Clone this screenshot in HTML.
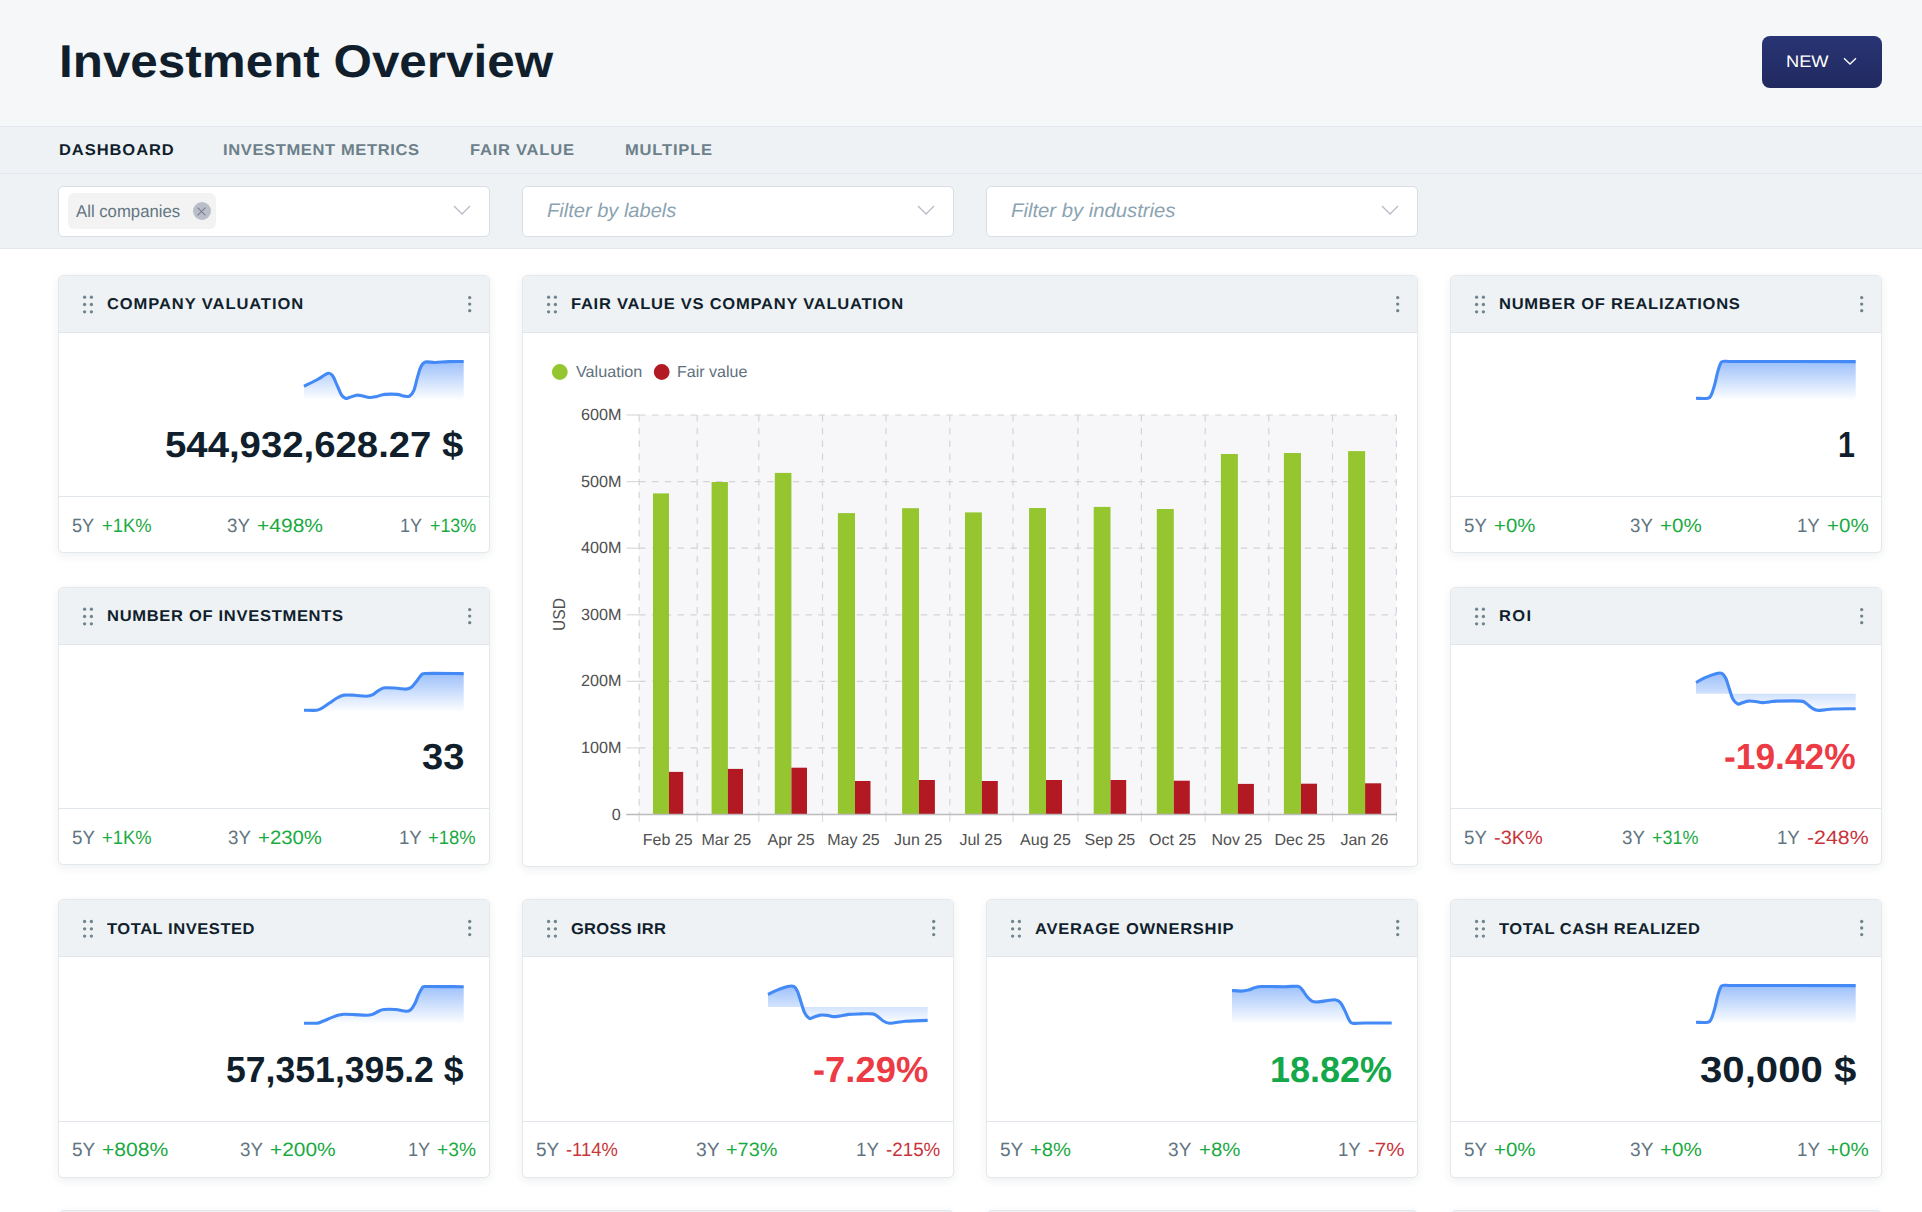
<!DOCTYPE html><html lang="en"><head><meta charset="utf-8"><title>Investment Overview</title><style>
*{box-sizing:border-box}
html,body{margin:0;padding:0}
body{width:1922px;height:1212px;overflow:hidden;background:#fff;position:relative;font-family:'Liberation Sans', sans-serif}
.t{position:absolute;white-space:pre;line-height:normal;transform-origin:0 0;font-family:'Liberation Sans', sans-serif;text-rendering:geometricPrecision}
.hdr{position:absolute;left:0;top:0;width:100%;height:126px;background:#f5f7f9}
.tabs{position:absolute;left:0;top:126px;width:100%;height:123px;background:#eef2f5;border-top:1px solid #e3e7ee;border-bottom:1px solid #e3e7ee}
.tabs:after{content:"";position:absolute;left:0;right:0;top:46px;height:1px;background:#e3e7ee}
.btn{position:absolute;left:1762px;top:36px;width:120px;height:52px;border-radius:8px;background:linear-gradient(#283474,#21295f)}
.sel{position:absolute;top:186px;width:432px;height:51px;background:#fff;border:1px solid #d9dee6;border-radius:5px}
.chip{position:absolute;left:68px;top:193px;width:148px;height:36px;border-radius:6px;background:#f3f3f4}
.x{position:absolute;left:192.5px;top:202.1px;width:18.4px;height:18.4px;border-radius:50%;background:#b9bec9}
.card{position:absolute;background:#fff;border:1px solid #e3e8ec;border-radius:5px;box-shadow:0 3px 10px rgba(20,40,60,.07);overflow:hidden}
.ch{height:57px;background:#eef2f5;border-bottom:1px solid #dfe5ea}
.cf{position:absolute;left:0;right:0;top:220px;height:1px;background:#dfe5ea}
.dot{position:absolute;width:3.4px;height:3.4px;border-radius:50%;background:#6f848d}
.sp{position:absolute;overflow:visible}
</style></head><body><svg width="0" height="0" style="position:absolute"><defs><linearGradient id="sg" gradientUnits="userSpaceOnUse" x1="0" y1="0" x2="0" y2="40"><stop offset="0" stop-color="#4488f6" stop-opacity=".55"/><stop offset="1" stop-color="#4488f6" stop-opacity="0"/></linearGradient></defs></svg><div class="hdr"></div><div class="tabs"></div><header><div class="btn"></div><svg style="position:absolute;left:1843px;top:57px" width="14" height="9" viewBox="0 0 14 9"><path d="M1,1.2 L7,7 L13,1.2" fill="none" stroke="#fff" stroke-width="1.3"/></svg><span class="t" style="left:58.78px;top:34.00px;font-size:46px;font-weight:700;color:#111f2d;transform:scaleX(1.0737);">Investment Overview</span>
<span class="t" style="left:1785.75px;top:51.90px;font-size:16.6px;font-weight:400;color:#ffffff;transform:scaleX(1.0993);">NEW</span></header>
<nav><span class="t" style="left:58.57px;top:141.90px;font-size:15.6px;font-weight:700;letter-spacing:0.866px;color:#111f2d;transform:scaleX(1.0600);">DASHBOARD</span>
<span class="t" style="left:223.48px;top:141.90px;font-size:15.6px;font-weight:700;letter-spacing:0.588px;color:#6c808a;transform:scaleX(1.0600);">INVESTMENT METRICS</span>
<span class="t" style="left:469.87px;top:141.90px;font-size:15.6px;font-weight:700;letter-spacing:0.720px;color:#6c808a;transform:scaleX(1.0600);">FAIR VALUE</span>
<span class="t" style="left:624.77px;top:141.90px;font-size:15.6px;font-weight:700;letter-spacing:0.762px;color:#6c808a;transform:scaleX(1.0600);">MULTIPLE</span></nav>
<div class="filters"><div class="sel" style="left:58px"></div><svg style="position:absolute;left:453.4px;top:205.0px" width="18" height="11" viewBox="0 0 18 11"><path d="M1,1 L9,9 L17,1" fill="none" stroke="#b7bcc8" stroke-width="1.3"/></svg><div class="sel" style="left:522px"></div><svg style="position:absolute;left:917.4px;top:205.0px" width="18" height="11" viewBox="0 0 18 11"><path d="M1,1 L9,9 L17,1" fill="none" stroke="#b7bcc8" stroke-width="1.3"/></svg><div class="sel" style="left:986px"></div><svg style="position:absolute;left:1381.4px;top:205.0px" width="18" height="11" viewBox="0 0 18 11"><path d="M1,1 L9,9 L17,1" fill="none" stroke="#b7bcc8" stroke-width="1.3"/></svg><div class="chip"></div><div class="x"></div><svg style="position:absolute;left:197.2px;top:206.8px" width="9" height="9" viewBox="0 0 9 9"><path d="M0.6,0.6 L8.4,8.4 M8.4,0.6 L0.6,8.4" fill="none" stroke="#7a808c" stroke-width="1.1"/></svg><span class="t" style="left:75.71px;top:202.10px;font-size:17.1px;font-weight:400;color:#62767f;transform:scaleX(0.9790);">All companies</span>
<span class="t" style="left:547.47px;top:200.10px;font-size:19.6px;font-weight:400;font-style:italic;color:#8ba3b1;transform:scaleX(1.0237);">Filter by labels</span>
<span class="t" style="left:1011.47px;top:200.10px;font-size:19.6px;font-weight:400;font-style:italic;color:#8ba3b1;transform:scaleX(1.0347);">Filter by industries</span></div>
<main>
<section><div class="card" style="left:58px;top:275px;width:432px;height:278px"><div class="ch"></div><div class="cf" style="top:220px"></div></div><svg class="sp" style="left:304.2px;top:360.0px" width="160" height="42" viewBox="0 0 160 42"><path d="M0.0,26.4C2.2,25.2 9.5,21.7 13.5,19.5C17.5,17.3 21.6,13.9 24.1,13.3C26.6,12.7 27.1,13.8 28.6,15.8C30.1,17.8 31.5,21.9 33.0,25.1C34.5,28.3 36.0,32.6 37.4,34.8C38.8,37.0 40.1,37.8 41.4,38.3C42.7,38.8 43.6,38.0 45.4,37.5C47.2,37.0 50.3,35.5 52.4,35.2C54.5,34.9 55.6,35.3 57.8,35.7C60.0,36.1 63.2,37.4 65.7,37.5C68.2,37.6 70.3,36.9 72.8,36.4C75.3,35.9 77.4,34.7 80.8,34.4C84.2,34.1 89.9,34.1 93.1,34.4C96.3,34.7 98.1,35.8 100.2,36.1C102.3,36.4 103.9,37.1 105.5,36.1C107.1,35.1 108.6,33.6 109.9,30.4C111.2,27.2 112.3,21.1 113.5,17.1C114.7,13.1 115.7,9.0 117.0,6.5C118.3,4.0 119.0,2.8 121.4,2.1C123.8,1.4 127.4,2.6 131.2,2.5C135.0,2.4 139.7,1.8 144.4,1.6C149.2,1.4 157.1,1.5 159.7,1.5L159.7,40L0,40Z" fill="url(#sg)"/><path d="M0.0,26.4C2.2,25.2 9.5,21.7 13.5,19.5C17.5,17.3 21.6,13.9 24.1,13.3C26.6,12.7 27.1,13.8 28.6,15.8C30.1,17.8 31.5,21.9 33.0,25.1C34.5,28.3 36.0,32.6 37.4,34.8C38.8,37.0 40.1,37.8 41.4,38.3C42.7,38.8 43.6,38.0 45.4,37.5C47.2,37.0 50.3,35.5 52.4,35.2C54.5,34.9 55.6,35.3 57.8,35.7C60.0,36.1 63.2,37.4 65.7,37.5C68.2,37.6 70.3,36.9 72.8,36.4C75.3,35.9 77.4,34.7 80.8,34.4C84.2,34.1 89.9,34.1 93.1,34.4C96.3,34.7 98.1,35.8 100.2,36.1C102.3,36.4 103.9,37.1 105.5,36.1C107.1,35.1 108.6,33.6 109.9,30.4C111.2,27.2 112.3,21.1 113.5,17.1C114.7,13.1 115.7,9.0 117.0,6.5C118.3,4.0 119.0,2.8 121.4,2.1C123.8,1.4 127.4,2.6 131.2,2.5C135.0,2.4 139.7,1.8 144.4,1.6C149.2,1.4 157.1,1.5 159.7,1.5" fill="none" stroke="#448af7" stroke-width="3.1" stroke-linejoin="round"/></svg><span class="t" style="left:107.10px;top:295.95px;font-size:15.6px;font-weight:700;letter-spacing:0.859px;color:#111f2d;transform:scaleX(1.0600);">COMPANY VALUATION</span>
<span class="t" style="left:165.36px;top:423.80px;font-size:36.2px;font-weight:700;color:#111f2d;transform:scaleX(1.0591);">544,932,628.27 $</span>
<span class="t" style="left:71.88px;top:515.50px;font-size:19.3px;font-weight:400;color:#62747f;transform:scaleX(0.9427);">5Y</span>
<span class="t" style="left:101.89px;top:515.50px;font-size:19.3px;font-weight:400;color:#1aaa42;transform:scaleX(0.9514);">+1K%</span>
<span class="t" style="left:226.89px;top:515.50px;font-size:19.3px;font-weight:400;color:#62747f;transform:scaleX(0.9730);">3Y</span>
<span class="t" style="left:257.47px;top:515.50px;font-size:19.3px;font-weight:400;color:#1aaa42;transform:scaleX(1.0896);">+498%</span>
<span class="t" style="left:399.80px;top:515.50px;font-size:19.3px;font-weight:400;color:#62747f;transform:scaleX(0.9374);">1Y</span>
<span class="t" style="left:429.71px;top:515.50px;font-size:19.3px;font-weight:400;color:#1aaa42;transform:scaleX(0.9267);">+13%</span></section>
<section><div class="card" style="left:58px;top:587px;width:432px;height:278px"><div class="ch"></div><div class="cf" style="top:220px"></div></div><svg class="sp" style="left:304.2px;top:672.0px" width="160" height="42" viewBox="0 0 160 42"><path d="M0.0,38.2C2.1,38.2 9.6,38.6 12.6,38.3C15.6,37.9 15.8,37.4 18.0,36.1C20.2,34.9 23.2,32.6 25.9,30.8C28.5,29.0 31.5,26.8 33.9,25.5C36.3,24.2 37.3,23.5 40.1,23.1C42.9,22.7 47.0,23.1 50.7,23.3C54.4,23.5 59.2,24.3 62.2,24.2C65.2,24.1 66.3,23.9 68.4,22.9C70.5,21.9 72.5,19.6 74.6,18.4C76.7,17.2 77.7,16.2 80.8,15.8C83.9,15.4 89.6,16.0 93.1,16.2C96.6,16.4 99.6,17.2 102.0,17.1C104.4,17.0 105.5,16.6 107.3,15.3C109.1,14.0 111.0,11.2 112.6,9.2C114.2,7.2 115.7,4.7 117.0,3.4C118.3,2.1 117.0,1.8 120.6,1.5C127.7,1.2 153.2,1.6 159.7,1.6L159.7,40L0,40Z" fill="url(#sg)"/><path d="M0.0,38.2C2.1,38.2 9.6,38.6 12.6,38.3C15.6,37.9 15.8,37.4 18.0,36.1C20.2,34.9 23.2,32.6 25.9,30.8C28.5,29.0 31.5,26.8 33.9,25.5C36.3,24.2 37.3,23.5 40.1,23.1C42.9,22.7 47.0,23.1 50.7,23.3C54.4,23.5 59.2,24.3 62.2,24.2C65.2,24.1 66.3,23.9 68.4,22.9C70.5,21.9 72.5,19.6 74.6,18.4C76.7,17.2 77.7,16.2 80.8,15.8C83.9,15.4 89.6,16.0 93.1,16.2C96.6,16.4 99.6,17.2 102.0,17.1C104.4,17.0 105.5,16.6 107.3,15.3C109.1,14.0 111.0,11.2 112.6,9.2C114.2,7.2 115.7,4.7 117.0,3.4C118.3,2.1 117.0,1.8 120.6,1.5C127.7,1.2 153.2,1.6 159.7,1.6" fill="none" stroke="#448af7" stroke-width="3.1" stroke-linejoin="round"/></svg><span class="t" style="left:107.07px;top:607.95px;font-size:15.6px;font-weight:700;letter-spacing:0.651px;color:#111f2d;transform:scaleX(1.0600);">NUMBER OF INVESTMENTS</span>
<span class="t" style="left:421.97px;top:735.80px;font-size:36.2px;font-weight:700;color:#111f2d;transform:scaleX(1.0547);">33</span>
<span class="t" style="left:71.85px;top:827.50px;font-size:19.3px;font-weight:400;color:#62747f;transform:scaleX(0.9747);">5Y</span>
<span class="t" style="left:101.89px;top:827.50px;font-size:19.3px;font-weight:400;color:#1aaa42;transform:scaleX(0.9514);">+1K%</span>
<span class="t" style="left:227.59px;top:827.50px;font-size:19.3px;font-weight:400;color:#62747f;transform:scaleX(0.9730);">3Y</span>
<span class="t" style="left:257.80px;top:827.50px;font-size:19.3px;font-weight:400;color:#1aaa42;transform:scaleX(1.0559);">+230%</span>
<span class="t" style="left:398.65px;top:827.50px;font-size:19.3px;font-weight:400;color:#62747f;transform:scaleX(0.9656);">1Y</span>
<span class="t" style="left:428.49px;top:827.50px;font-size:19.3px;font-weight:400;color:#1aaa42;transform:scaleX(0.9535);">+18%</span></section>
<section><div class="card" style="left:1450px;top:275px;width:432px;height:278px"><div class="ch"></div><div class="cf" style="top:220px"></div></div><svg class="sp" style="left:1696.2px;top:360.0px" width="160" height="42" viewBox="0 0 160 42"><path d="M0.0,38.3C2.0,38.3 9.2,38.9 11.8,38.3C14.4,37.7 14.1,37.1 15.3,34.8C16.5,32.4 17.8,27.9 18.8,24.2C19.8,20.5 20.6,15.9 21.5,12.7C22.4,9.4 23.2,6.6 24.1,4.7C25.0,2.8 24.2,1.9 26.8,1.4C29.4,0.9 26.8,1.5 40.0,1.5C62.1,1.5 139.8,1.6 159.7,1.6L159.7,40L0,40Z" fill="url(#sg)"/><path d="M0.0,38.3C2.0,38.3 9.2,38.9 11.8,38.3C14.4,37.7 14.1,37.1 15.3,34.8C16.5,32.4 17.8,27.9 18.8,24.2C19.8,20.5 20.6,15.9 21.5,12.7C22.4,9.4 23.2,6.6 24.1,4.7C25.0,2.8 24.2,1.9 26.8,1.4C29.4,0.9 26.8,1.5 40.0,1.5C62.1,1.5 139.8,1.6 159.7,1.6" fill="none" stroke="#448af7" stroke-width="3.1" stroke-linejoin="round"/></svg><span class="t" style="left:1498.87px;top:295.95px;font-size:15.6px;font-weight:700;letter-spacing:0.688px;color:#111f2d;transform:scaleX(1.0600);">NUMBER OF REALIZATIONS</span>
<span class="t" style="left:1837.83px;top:423.80px;font-size:36.2px;font-weight:700;color:#111f2d;transform:scaleX(0.8400);">1</span>
<span class="t" style="left:1463.95px;top:515.50px;font-size:19.3px;font-weight:400;color:#62747f;transform:scaleX(0.9701);">5Y</span>
<span class="t" style="left:1494.10px;top:515.50px;font-size:19.3px;font-weight:400;color:#1aaa42;transform:scaleX(1.0549);">+0%</span>
<span class="t" style="left:1630.29px;top:515.50px;font-size:19.3px;font-weight:400;color:#62747f;transform:scaleX(0.9684);">3Y</span>
<span class="t" style="left:1660.39px;top:515.50px;font-size:19.3px;font-weight:400;color:#1aaa42;transform:scaleX(1.0655);">+0%</span>
<span class="t" style="left:1796.65px;top:515.50px;font-size:19.3px;font-weight:400;color:#62747f;transform:scaleX(0.9656);">1Y</span>
<span class="t" style="left:1826.69px;top:515.50px;font-size:19.3px;font-weight:400;color:#1aaa42;transform:scaleX(1.0655);">+0%</span></section>
<section><div class="card" style="left:1450px;top:587px;width:432px;height:278px"><div class="ch"></div><div class="cf" style="top:220px"></div></div><svg class="sp" style="left:1696.2px;top:672.0px" width="160" height="42" viewBox="0 0 160 42"><path d="M0.0,10.5C1.5,9.7 5.7,7.1 9.1,5.6C12.5,4.1 17.8,2.1 20.6,1.4C23.4,0.7 24.3,0.5 25.9,1.4C27.4,2.2 28.6,3.9 29.9,6.5C31.1,9.1 32.2,13.6 33.4,17.1C34.6,20.6 35.6,24.8 37.0,27.3C38.4,29.8 40.2,31.4 41.8,32.0C43.3,32.6 44.5,31.3 46.3,30.8C48.1,30.3 50.2,29.3 52.4,29.1C54.6,28.9 57.1,29.2 59.5,29.5C61.9,29.8 64.2,30.5 66.6,30.6C69.0,30.7 71.3,30.1 73.7,29.9C76.1,29.6 75.7,29.2 80.8,29.1C85.9,29.0 99.8,28.7 104.6,29.1C109.4,29.5 108.0,30.1 109.9,31.3C111.8,32.5 114.2,34.9 116.1,36.1C118.0,37.3 119.3,38.0 121.4,38.3C123.5,38.6 125.8,38.1 128.5,37.9C131.2,37.7 132.2,37.2 137.4,37.0C142.6,36.8 156.0,36.8 159.7,36.7L159.7,21.8L0,21.8Z" fill="url(#sg)"/><path d="M0.0,10.5C1.5,9.7 5.7,7.1 9.1,5.6C12.5,4.1 17.8,2.1 20.6,1.4C23.4,0.7 24.3,0.5 25.9,1.4C27.4,2.2 28.6,3.9 29.9,6.5C31.1,9.1 32.2,13.6 33.4,17.1C34.6,20.6 35.6,24.8 37.0,27.3C38.4,29.8 40.2,31.4 41.8,32.0C43.3,32.6 44.5,31.3 46.3,30.8C48.1,30.3 50.2,29.3 52.4,29.1C54.6,28.9 57.1,29.2 59.5,29.5C61.9,29.8 64.2,30.5 66.6,30.6C69.0,30.7 71.3,30.1 73.7,29.9C76.1,29.6 75.7,29.2 80.8,29.1C85.9,29.0 99.8,28.7 104.6,29.1C109.4,29.5 108.0,30.1 109.9,31.3C111.8,32.5 114.2,34.9 116.1,36.1C118.0,37.3 119.3,38.0 121.4,38.3C123.5,38.6 125.8,38.1 128.5,37.9C131.2,37.7 132.2,37.2 137.4,37.0C142.6,36.8 156.0,36.8 159.7,36.7" fill="none" stroke="#448af7" stroke-width="3.1" stroke-linejoin="round"/></svg><span class="t" style="left:1498.87px;top:607.95px;font-size:15.6px;font-weight:700;letter-spacing:1.276px;color:#111f2d;transform:scaleX(1.0600);">ROI</span>
<span class="t" style="left:1723.79px;top:735.80px;font-size:36.2px;font-weight:700;color:#ec3b45;transform:scaleX(0.9766);">-19.42%</span>
<span class="t" style="left:1463.95px;top:827.50px;font-size:19.3px;font-weight:400;color:#62747f;transform:scaleX(0.9701);">5Y</span>
<span class="t" style="left:1494.15px;top:827.50px;font-size:19.3px;font-weight:400;color:#c9333b;transform:scaleX(1.0358);">-3K%</span>
<span class="t" style="left:1621.79px;top:827.50px;font-size:19.3px;font-weight:400;color:#62747f;transform:scaleX(0.9730);">3Y</span>
<span class="t" style="left:1652.01px;top:827.50px;font-size:19.3px;font-weight:400;color:#1aaa42;transform:scaleX(0.9308);">+31%</span>
<span class="t" style="left:1776.75px;top:827.50px;font-size:19.3px;font-weight:400;color:#62747f;transform:scaleX(0.9656);">1Y</span>
<span class="t" style="left:1806.69px;top:827.50px;font-size:19.3px;font-weight:400;color:#c9333b;transform:scaleX(1.1065);">-248%</span></section>
<section><div class="card" style="left:58px;top:899px;width:432px;height:279px"><div class="ch"></div><div class="cf" style="top:221px"></div></div><svg class="sp" style="left:304.2px;top:983.9px" width="160" height="42" viewBox="0 0 160 42"><path d="M0.0,39.2C2.1,39.2 9.5,39.5 12.6,39.2C15.7,38.9 16.4,38.2 18.8,37.3C21.2,36.4 24.1,34.9 26.8,33.9C29.5,32.9 32.6,31.7 34.8,31.1C37.0,30.5 37.5,30.3 40.1,30.2C42.8,30.1 47.0,30.4 50.7,30.6C54.4,30.8 59.2,31.3 62.2,31.3C65.2,31.3 66.3,31.1 68.4,30.4C70.5,29.7 72.7,28.1 74.6,27.3C76.5,26.5 77.1,25.8 79.9,25.5C82.7,25.2 87.7,25.2 91.4,25.5C95.1,25.8 99.5,27.2 102.0,27.3C104.5,27.4 104.9,27.2 106.4,26.0C107.9,24.8 109.5,22.3 110.8,19.8C112.1,17.3 113.2,13.5 114.4,10.9C115.6,8.3 116.9,5.7 117.9,4.3C118.9,2.9 117.9,2.8 120.6,2.5C127.6,2.2 153.2,2.8 159.7,2.8L159.7,40L0,40Z" fill="url(#sg)"/><path d="M0.0,39.2C2.1,39.2 9.5,39.5 12.6,39.2C15.7,38.9 16.4,38.2 18.8,37.3C21.2,36.4 24.1,34.9 26.8,33.9C29.5,32.9 32.6,31.7 34.8,31.1C37.0,30.5 37.5,30.3 40.1,30.2C42.8,30.1 47.0,30.4 50.7,30.6C54.4,30.8 59.2,31.3 62.2,31.3C65.2,31.3 66.3,31.1 68.4,30.4C70.5,29.7 72.7,28.1 74.6,27.3C76.5,26.5 77.1,25.8 79.9,25.5C82.7,25.2 87.7,25.2 91.4,25.5C95.1,25.8 99.5,27.2 102.0,27.3C104.5,27.4 104.9,27.2 106.4,26.0C107.9,24.8 109.5,22.3 110.8,19.8C112.1,17.3 113.2,13.5 114.4,10.9C115.6,8.3 116.9,5.7 117.9,4.3C118.9,2.9 117.9,2.8 120.6,2.5C127.6,2.2 153.2,2.8 159.7,2.8" fill="none" stroke="#448af7" stroke-width="3.1" stroke-linejoin="round"/></svg><span class="t" style="left:107.44px;top:920.70px;font-size:15.6px;font-weight:700;letter-spacing:0.509px;color:#111f2d;transform:scaleX(1.0600);">TOTAL INVESTED</span>
<span class="t" style="left:226.37px;top:1048.55px;font-size:36.2px;font-weight:700;color:#111f2d;transform:scaleX(0.9838);">57,351,395.2 $</span>
<span class="t" style="left:71.64px;top:1140.25px;font-size:19.3px;font-weight:400;color:#62747f;transform:scaleX(0.9839);">5Y</span>
<span class="t" style="left:102.07px;top:1140.25px;font-size:19.3px;font-weight:400;color:#1aaa42;transform:scaleX(1.0947);">+808%</span>
<span class="t" style="left:239.68px;top:1140.25px;font-size:19.3px;font-weight:400;color:#62747f;transform:scaleX(0.9777);">3Y</span>
<span class="t" style="left:270.08px;top:1140.25px;font-size:19.3px;font-weight:400;color:#1aaa42;transform:scaleX(1.0846);">+200%</span>
<span class="t" style="left:407.59px;top:1140.25px;font-size:19.3px;font-weight:400;color:#62747f;transform:scaleX(0.9421);">1Y</span>
<span class="t" style="left:437.25px;top:1140.25px;font-size:19.3px;font-weight:400;color:#1aaa42;transform:scaleX(0.9965);">+3%</span></section>
<section><div class="card" style="left:522px;top:899px;width:432px;height:279px"><div class="ch"></div><div class="cf" style="top:221px"></div></div><svg class="sp" style="left:768.2px;top:983.9px" width="160" height="42" viewBox="0 0 160 42"><path d="M0.0,10.5C1.5,9.8 5.8,7.4 9.1,6.1C12.4,4.8 16.9,3.1 19.7,2.5C22.5,1.9 24.3,1.7 25.9,2.5C27.5,3.3 28.3,4.8 29.5,7.4C30.7,10.0 31.8,14.5 33.0,18.0C34.2,21.5 35.1,25.9 36.5,28.6C37.9,31.3 39.9,33.6 41.4,34.4C42.9,35.2 43.6,33.8 45.4,33.2C47.2,32.7 50.0,31.4 52.4,31.1C54.8,30.8 57.4,31.1 59.5,31.4C61.6,31.6 62.9,32.5 64.8,32.6C66.7,32.7 68.3,32.5 71.0,32.1C73.7,31.7 77.1,30.8 80.8,30.4C84.5,30.0 89.1,30.0 93.1,29.9C97.1,29.8 101.8,29.4 104.6,29.9C107.4,30.3 108.0,31.3 109.9,32.6C111.8,33.9 114.2,36.4 116.1,37.5C118.0,38.6 119.6,39.0 121.4,39.2C123.2,39.4 124.0,39.1 126.7,38.8C129.4,38.5 131.9,37.7 137.4,37.3C142.9,36.9 156.0,36.5 159.7,36.4L159.7,23.1L0,23.1Z" fill="url(#sg)"/><path d="M0.0,10.5C1.5,9.8 5.8,7.4 9.1,6.1C12.4,4.8 16.9,3.1 19.7,2.5C22.5,1.9 24.3,1.7 25.9,2.5C27.5,3.3 28.3,4.8 29.5,7.4C30.7,10.0 31.8,14.5 33.0,18.0C34.2,21.5 35.1,25.9 36.5,28.6C37.9,31.3 39.9,33.6 41.4,34.4C42.9,35.2 43.6,33.8 45.4,33.2C47.2,32.7 50.0,31.4 52.4,31.1C54.8,30.8 57.4,31.1 59.5,31.4C61.6,31.6 62.9,32.5 64.8,32.6C66.7,32.7 68.3,32.5 71.0,32.1C73.7,31.7 77.1,30.8 80.8,30.4C84.5,30.0 89.1,30.0 93.1,29.9C97.1,29.8 101.8,29.4 104.6,29.9C107.4,30.3 108.0,31.3 109.9,32.6C111.8,33.9 114.2,36.4 116.1,37.5C118.0,38.6 119.6,39.0 121.4,39.2C123.2,39.4 124.0,39.1 126.7,38.8C129.4,38.5 131.9,37.7 137.4,37.3C142.9,36.9 156.0,36.5 159.7,36.4" fill="none" stroke="#448af7" stroke-width="3.1" stroke-linejoin="round"/></svg><span class="t" style="left:571.08px;top:920.70px;font-size:15.6px;font-weight:700;letter-spacing:0.244px;color:#111f2d;transform:scaleX(1.0600);">GROSS IRR</span>
<span class="t" style="left:813.05px;top:1048.55px;font-size:36.2px;font-weight:700;color:#ec3b45;transform:scaleX(1.0053);">-7.29%</span>
<span class="t" style="left:535.74px;top:1140.25px;font-size:19.3px;font-weight:400;color:#62747f;transform:scaleX(0.9839);">5Y</span>
<span class="t" style="left:565.82px;top:1140.25px;font-size:19.3px;font-weight:400;color:#c9333b;transform:scaleX(0.9527);">-114%</span>
<span class="t" style="left:695.55px;top:1140.25px;font-size:19.3px;font-weight:400;color:#62747f;transform:scaleX(1.0055);">3Y</span>
<span class="t" style="left:725.92px;top:1140.25px;font-size:19.3px;font-weight:400;color:#1aaa42;transform:scaleX(1.0298);">+73%</span>
<span class="t" style="left:856.05px;top:1140.25px;font-size:19.3px;font-weight:400;color:#62747f;transform:scaleX(0.9704);">1Y</span>
<span class="t" style="left:886.00px;top:1140.25px;font-size:19.3px;font-weight:400;color:#c9333b;transform:scaleX(0.9739);">-215%</span></section>
<section><div class="card" style="left:986px;top:899px;width:432px;height:279px"><div class="ch"></div><div class="cf" style="top:221px"></div></div><svg class="sp" style="left:1232.2px;top:983.9px" width="160" height="42" viewBox="0 0 160 42"><path d="M0.0,6.5C1.5,6.6 6.4,7.2 9.1,7.1C11.8,7.0 14.0,6.6 16.2,6.1C18.4,5.5 20.2,4.4 22.4,3.8C24.6,3.2 24.5,2.7 29.5,2.5C34.5,2.3 46.4,2.7 52.4,2.7C58.4,2.7 62.8,1.8 65.7,2.3C68.7,2.8 68.5,3.8 70.1,5.6C71.7,7.4 73.8,11.2 75.4,13.1C77.0,15.0 78.4,16.3 79.9,17.1C81.4,17.9 82.1,18.0 84.3,18.0C86.5,18.0 90.0,17.3 93.1,16.9C96.2,16.5 100.4,15.6 102.9,15.8C105.4,16.1 106.6,16.7 108.2,18.4C109.8,20.1 111.1,23.1 112.6,26.0C114.1,28.9 115.7,33.5 117.0,35.7C118.3,37.9 117.9,38.7 120.6,39.2C123.2,39.8 126.4,39.0 132.9,39.0C139.4,39.0 155.2,39.0 159.7,39.0L159.7,40L0,40Z" fill="url(#sg)"/><path d="M0.0,6.5C1.5,6.6 6.4,7.2 9.1,7.1C11.8,7.0 14.0,6.6 16.2,6.1C18.4,5.5 20.2,4.4 22.4,3.8C24.6,3.2 24.5,2.7 29.5,2.5C34.5,2.3 46.4,2.7 52.4,2.7C58.4,2.7 62.8,1.8 65.7,2.3C68.7,2.8 68.5,3.8 70.1,5.6C71.7,7.4 73.8,11.2 75.4,13.1C77.0,15.0 78.4,16.3 79.9,17.1C81.4,17.9 82.1,18.0 84.3,18.0C86.5,18.0 90.0,17.3 93.1,16.9C96.2,16.5 100.4,15.6 102.9,15.8C105.4,16.1 106.6,16.7 108.2,18.4C109.8,20.1 111.1,23.1 112.6,26.0C114.1,28.9 115.7,33.5 117.0,35.7C118.3,37.9 117.9,38.7 120.6,39.2C123.2,39.8 126.4,39.0 132.9,39.0C139.4,39.0 155.2,39.0 159.7,39.0" fill="none" stroke="#448af7" stroke-width="3.1" stroke-linejoin="round"/></svg><span class="t" style="left:1035.26px;top:920.70px;font-size:15.6px;font-weight:700;letter-spacing:0.681px;color:#111f2d;transform:scaleX(1.0600);">AVERAGE OWNERSHIP</span>
<span class="t" style="left:1269.97px;top:1048.55px;font-size:36.2px;font-weight:700;color:#15a84a;transform:scaleX(0.9941);">18.82%</span>
<span class="t" style="left:999.74px;top:1140.25px;font-size:19.3px;font-weight:400;color:#62747f;transform:scaleX(0.9884);">5Y</span>
<span class="t" style="left:1029.81px;top:1140.25px;font-size:19.3px;font-weight:400;color:#1aaa42;transform:scaleX(1.0469);">+8%</span>
<span class="t" style="left:1168.46px;top:1140.25px;font-size:19.3px;font-weight:400;color:#62747f;transform:scaleX(0.9916);">3Y</span>
<span class="t" style="left:1198.80px;top:1140.25px;font-size:19.3px;font-weight:400;color:#1aaa42;transform:scaleX(1.0576);">+8%</span>
<span class="t" style="left:1338.05px;top:1140.25px;font-size:19.3px;font-weight:400;color:#62747f;transform:scaleX(0.9656);">1Y</span>
<span class="t" style="left:1367.93px;top:1140.25px;font-size:19.3px;font-weight:400;color:#c9333b;transform:scaleX(1.0637);">-7%</span></section>
<section><div class="card" style="left:1450px;top:899px;width:432px;height:279px"><div class="ch"></div><div class="cf" style="top:221px"></div></div><svg class="sp" style="left:1696.2px;top:983.9px" width="160" height="42" viewBox="0 0 160 42"><path d="M0.0,38.3C2.0,38.3 9.2,38.9 11.8,38.3C14.4,37.7 14.1,37.1 15.3,34.8C16.5,32.4 17.8,27.9 18.8,24.2C19.8,20.5 20.6,15.9 21.5,12.7C22.4,9.4 23.2,6.6 24.1,4.7C25.0,2.8 24.2,1.9 26.8,1.4C29.4,0.9 26.8,1.5 40.0,1.5C62.1,1.5 139.8,1.6 159.7,1.6L159.7,40L0,40Z" fill="url(#sg)"/><path d="M0.0,38.3C2.0,38.3 9.2,38.9 11.8,38.3C14.4,37.7 14.1,37.1 15.3,34.8C16.5,32.4 17.8,27.9 18.8,24.2C19.8,20.5 20.6,15.9 21.5,12.7C22.4,9.4 23.2,6.6 24.1,4.7C25.0,2.8 24.2,1.9 26.8,1.4C29.4,0.9 26.8,1.5 40.0,1.5C62.1,1.5 139.8,1.6 159.7,1.6" fill="none" stroke="#448af7" stroke-width="3.1" stroke-linejoin="round"/></svg><span class="t" style="left:1499.44px;top:920.70px;font-size:15.6px;font-weight:700;letter-spacing:0.467px;color:#111f2d;transform:scaleX(1.0600);">TOTAL CASH REALIZED</span>
<span class="t" style="left:1699.83px;top:1048.55px;font-size:36.2px;font-weight:700;color:#111f2d;transform:scaleX(1.1093);">30,000 $</span>
<span class="t" style="left:1463.74px;top:1140.25px;font-size:19.3px;font-weight:400;color:#62747f;transform:scaleX(0.9793);">5Y</span>
<span class="t" style="left:1493.90px;top:1140.25px;font-size:19.3px;font-weight:400;color:#1aaa42;transform:scaleX(1.0629);">+0%</span>
<span class="t" style="left:1629.76px;top:1140.25px;font-size:19.3px;font-weight:400;color:#62747f;transform:scaleX(0.9916);">3Y</span>
<span class="t" style="left:1660.39px;top:1140.25px;font-size:19.3px;font-weight:400;color:#1aaa42;transform:scaleX(1.0709);">+0%</span>
<span class="t" style="left:1796.75px;top:1140.25px;font-size:19.3px;font-weight:400;color:#62747f;transform:scaleX(0.9704);">1Y</span>
<span class="t" style="left:1826.69px;top:1140.25px;font-size:19.3px;font-weight:400;color:#1aaa42;transform:scaleX(1.0682);">+0%</span></section>
<section><div class="card" style="left:522px;top:275px;width:896px;height:592px"><div class="ch"></div></div><span class="t" style="left:570.67px;top:295.95px;font-size:15.6px;font-weight:700;letter-spacing:0.702px;color:#111f2d;transform:scaleX(1.0600);">FAIR VALUE VS COMPANY VALUATION</span>
<span class="t" style="left:575.59px;top:364.10px;font-size:16px;font-weight:400;color:#5f717d;transform:scaleX(1.0114);">Valuation</span>
<span class="t" style="left:676.74px;top:364.10px;font-size:16px;font-weight:400;color:#5f717d;transform:scaleX(1.0011);">Fair value</span>
<span class="t" style="left:611.81px;top:805.50px;font-size:16.2px;font-weight:400;color:#505050;">0</span>
<span class="t" style="left:581.01px;top:738.92px;font-size:16.2px;font-weight:400;color:#505050;">100M</span>
<span class="t" style="left:581.01px;top:672.33px;font-size:16.2px;font-weight:400;color:#505050;">200M</span>
<span class="t" style="left:581.01px;top:605.75px;font-size:16.2px;font-weight:400;color:#505050;">300M</span>
<span class="t" style="left:581.01px;top:539.17px;font-size:16.2px;font-weight:400;color:#505050;">400M</span>
<span class="t" style="left:581.01px;top:472.58px;font-size:16.2px;font-weight:400;color:#505050;">500M</span>
<span class="t" style="left:581.01px;top:406.00px;font-size:16.2px;font-weight:400;color:#505050;">600M</span>
<span class="t" style="left:642.76px;top:832.20px;font-size:16px;font-weight:400;color:#505050;">Feb 25</span>
<span class="t" style="left:701.46px;top:832.20px;font-size:16px;font-weight:400;color:#505050;">Mar 25</span>
<span class="t" style="left:767.48px;top:832.20px;font-size:16px;font-weight:400;color:#505050;">Apr 25</span>
<span class="t" style="left:827.25px;top:832.20px;font-size:16px;font-weight:400;color:#505050;">May 25</span>
<span class="t" style="left:894.09px;top:832.20px;font-size:16px;font-weight:400;color:#505050;">Jun 25</span>
<span class="t" style="left:959.48px;top:832.20px;font-size:16px;font-weight:400;color:#505050;">Jul 25</span>
<span class="t" style="left:1020.07px;top:832.20px;font-size:16px;font-weight:400;color:#505050;">Aug 25</span>
<span class="t" style="left:1084.50px;top:832.20px;font-size:16px;font-weight:400;color:#505050;">Sep 25</span>
<span class="t" style="left:1149.05px;top:832.20px;font-size:16px;font-weight:400;color:#505050;">Oct 25</span>
<span class="t" style="left:1211.45px;top:832.20px;font-size:16px;font-weight:400;color:#505050;">Nov 25</span>
<span class="t" style="left:1274.45px;top:832.20px;font-size:16px;font-weight:400;color:#505050;">Dec 25</span>
<span class="t" style="left:1340.48px;top:832.20px;font-size:16px;font-weight:400;color:#505050;">Jan 26</span></section>
<section><div class="card" style="left:58px;top:1210px;width:896px;height:100px"><div class="ch"></div></div></section><section><div class="card" style="left:986px;top:1210px;width:432px;height:100px"><div class="ch"></div></div></section><section><div class="card" style="left:1450px;top:1210px;width:432px;height:100px"><div class="ch"></div></div></section>
</main>
<svg style="position:absolute;left:0;top:0;pointer-events:none" width="1922" height="1212" viewBox="0 0 1922 1212"><rect x="639.2" y="415.0" width="757.2" height="399.5" fill="#f7f7fa"/><line x1="626.4" x2="639.2" y1="814.5" y2="814.5" stroke="#d9d9db" stroke-width="1.2"/><line x1="626.4" x2="639.2" y1="747.9" y2="747.9" stroke="#d9d9db" stroke-width="1.2"/><line x1="639.2" x2="1396.4" y1="747.9" y2="747.9" stroke="#d4d4d8" stroke-width="1.2" stroke-dasharray="6.4 6.4"/><line x1="626.4" x2="639.2" y1="681.3" y2="681.3" stroke="#d9d9db" stroke-width="1.2"/><line x1="639.2" x2="1396.4" y1="681.3" y2="681.3" stroke="#d4d4d8" stroke-width="1.2" stroke-dasharray="6.4 6.4"/><line x1="626.4" x2="639.2" y1="614.8" y2="614.8" stroke="#d9d9db" stroke-width="1.2"/><line x1="639.2" x2="1396.4" y1="614.8" y2="614.8" stroke="#d4d4d8" stroke-width="1.2" stroke-dasharray="6.4 6.4"/><line x1="626.4" x2="639.2" y1="548.2" y2="548.2" stroke="#d9d9db" stroke-width="1.2"/><line x1="639.2" x2="1396.4" y1="548.2" y2="548.2" stroke="#d4d4d8" stroke-width="1.2" stroke-dasharray="6.4 6.4"/><line x1="626.4" x2="639.2" y1="481.6" y2="481.6" stroke="#d9d9db" stroke-width="1.2"/><line x1="639.2" x2="1396.4" y1="481.6" y2="481.6" stroke="#d4d4d8" stroke-width="1.2" stroke-dasharray="6.4 6.4"/><line x1="626.4" x2="639.2" y1="415.0" y2="415.0" stroke="#d9d9db" stroke-width="1.2"/><line x1="639.2" x2="1396.4" y1="415.0" y2="415.0" stroke="#d4d4d8" stroke-width="1.2" stroke-dasharray="6.4 6.4"/><line x1="639.2" x2="639.2" y1="415.0" y2="814.5" stroke="#d4d4d8" stroke-width="1.2" stroke-dasharray="6.4 6.4"/><line x1="639.2" x2="639.2" y1="814.5" y2="821.8" stroke="#dcdcde" stroke-width="1.2"/><line x1="697.2" x2="697.2" y1="415.0" y2="814.5" stroke="#d4d4d8" stroke-width="1.2" stroke-dasharray="6.4 6.4"/><line x1="697.2" x2="697.2" y1="814.5" y2="821.8" stroke="#dcdcde" stroke-width="1.2"/><line x1="758.8" x2="758.8" y1="415.0" y2="814.5" stroke="#d4d4d8" stroke-width="1.2" stroke-dasharray="6.4 6.4"/><line x1="758.8" x2="758.8" y1="814.5" y2="821.8" stroke="#dcdcde" stroke-width="1.2"/><line x1="822.5" x2="822.5" y1="415.0" y2="814.5" stroke="#d4d4d8" stroke-width="1.2" stroke-dasharray="6.4 6.4"/><line x1="822.5" x2="822.5" y1="814.5" y2="821.8" stroke="#dcdcde" stroke-width="1.2"/><line x1="886.0" x2="886.0" y1="415.0" y2="814.5" stroke="#d4d4d8" stroke-width="1.2" stroke-dasharray="6.4 6.4"/><line x1="886.0" x2="886.0" y1="814.5" y2="821.8" stroke="#dcdcde" stroke-width="1.2"/><line x1="949.8" x2="949.8" y1="415.0" y2="814.5" stroke="#d4d4d8" stroke-width="1.2" stroke-dasharray="6.4 6.4"/><line x1="949.8" x2="949.8" y1="814.5" y2="821.8" stroke="#dcdcde" stroke-width="1.2"/><line x1="1013.0" x2="1013.0" y1="415.0" y2="814.5" stroke="#d4d4d8" stroke-width="1.2" stroke-dasharray="6.4 6.4"/><line x1="1013.0" x2="1013.0" y1="814.5" y2="821.8" stroke="#dcdcde" stroke-width="1.2"/><line x1="1077.9" x2="1077.9" y1="415.0" y2="814.5" stroke="#d4d4d8" stroke-width="1.2" stroke-dasharray="6.4 6.4"/><line x1="1077.9" x2="1077.9" y1="814.5" y2="821.8" stroke="#dcdcde" stroke-width="1.2"/><line x1="1141.4" x2="1141.4" y1="415.0" y2="814.5" stroke="#d4d4d8" stroke-width="1.2" stroke-dasharray="6.4 6.4"/><line x1="1141.4" x2="1141.4" y1="814.5" y2="821.8" stroke="#dcdcde" stroke-width="1.2"/><line x1="1205.2" x2="1205.2" y1="415.0" y2="814.5" stroke="#d4d4d8" stroke-width="1.2" stroke-dasharray="6.4 6.4"/><line x1="1205.2" x2="1205.2" y1="814.5" y2="821.8" stroke="#dcdcde" stroke-width="1.2"/><line x1="1268.8" x2="1268.8" y1="415.0" y2="814.5" stroke="#d4d4d8" stroke-width="1.2" stroke-dasharray="6.4 6.4"/><line x1="1268.8" x2="1268.8" y1="814.5" y2="821.8" stroke="#dcdcde" stroke-width="1.2"/><line x1="1332.5" x2="1332.5" y1="415.0" y2="814.5" stroke="#d4d4d8" stroke-width="1.2" stroke-dasharray="6.4 6.4"/><line x1="1332.5" x2="1332.5" y1="814.5" y2="821.8" stroke="#dcdcde" stroke-width="1.2"/><line x1="1396.4" x2="1396.4" y1="415.0" y2="814.5" stroke="#d4d4d8" stroke-width="1.2" stroke-dasharray="6.4 6.4"/><line x1="1396.4" x2="1396.4" y1="814.5" y2="821.8" stroke="#dcdcde" stroke-width="1.2"/><rect x="653.0" y="493.4" width="16.0" height="321.1" fill="#95c52f"/><rect x="711.6" y="482.0" width="16.3" height="332.5" fill="#95c52f"/><rect x="774.8" y="472.9" width="16.6" height="341.6" fill="#95c52f"/><rect x="837.9" y="513.1" width="17.1" height="301.4" fill="#95c52f"/><rect x="902.1" y="508.2" width="16.9" height="306.3" fill="#95c52f"/><rect x="965.0" y="512.4" width="16.9" height="302.1" fill="#95c52f"/><rect x="1029.1" y="508.0" width="16.9" height="306.5" fill="#95c52f"/><rect x="1093.7" y="506.9" width="16.8" height="307.6" fill="#95c52f"/><rect x="1156.8" y="509.0" width="17.0" height="305.5" fill="#95c52f"/><rect x="1220.9" y="454.0" width="17.0" height="360.5" fill="#95c52f"/><rect x="1283.9" y="453.0" width="17.1" height="361.5" fill="#95c52f"/><rect x="1348.1" y="451.1" width="17.0" height="363.4" fill="#95c52f"/><rect x="669.0" y="771.9" width="14.2" height="42.6" fill="#b31922"/><rect x="727.9" y="768.9" width="15.1" height="45.6" fill="#b31922"/><rect x="791.4" y="767.7" width="15.6" height="46.8" fill="#b31922"/><rect x="855.0" y="781.0" width="15.5" height="33.5" fill="#b31922"/><rect x="919.0" y="780.0" width="15.9" height="34.5" fill="#b31922"/><rect x="981.9" y="781.0" width="15.9" height="33.5" fill="#b31922"/><rect x="1046.0" y="780.0" width="16.0" height="34.5" fill="#b31922"/><rect x="1110.5" y="780.0" width="15.7" height="34.5" fill="#b31922"/><rect x="1173.8" y="780.7" width="16.0" height="33.8" fill="#b31922"/><rect x="1237.9" y="783.9" width="16.0" height="30.6" fill="#b31922"/><rect x="1301.0" y="783.7" width="16.0" height="30.8" fill="#b31922"/><rect x="1365.1" y="783.3" width="16.1" height="31.2" fill="#b31922"/><line x1="626.4" x2="1397.0" y1="814.5" y2="814.5" stroke="#bcbcbc" stroke-width="1.6"/><circle cx="559.8" cy="372" r="7.9" fill="#95c52f"/><circle cx="661.7" cy="372" r="7.9" fill="#b31922"/><circle cx="84.6" cy="297.2" r="1.65" fill="#6f848d"/><circle cx="84.6" cy="304.5" r="1.65" fill="#6f848d"/><circle cx="84.6" cy="311.8" r="1.65" fill="#6f848d"/><circle cx="91.4" cy="297.2" r="1.65" fill="#6f848d"/><circle cx="91.4" cy="304.5" r="1.65" fill="#6f848d"/><circle cx="91.4" cy="311.8" r="1.65" fill="#6f848d"/><circle cx="469.7" cy="297.6" r="1.65" fill="#6f848d"/><circle cx="469.7" cy="304.1" r="1.65" fill="#6f848d"/><circle cx="469.7" cy="310.7" r="1.65" fill="#6f848d"/><circle cx="84.6" cy="609.2" r="1.65" fill="#6f848d"/><circle cx="84.6" cy="616.5" r="1.65" fill="#6f848d"/><circle cx="84.6" cy="623.8" r="1.65" fill="#6f848d"/><circle cx="91.4" cy="609.2" r="1.65" fill="#6f848d"/><circle cx="91.4" cy="616.5" r="1.65" fill="#6f848d"/><circle cx="91.4" cy="623.8" r="1.65" fill="#6f848d"/><circle cx="469.7" cy="609.6" r="1.65" fill="#6f848d"/><circle cx="469.7" cy="616.1" r="1.65" fill="#6f848d"/><circle cx="469.7" cy="622.7" r="1.65" fill="#6f848d"/><circle cx="1476.6" cy="297.2" r="1.65" fill="#6f848d"/><circle cx="1476.6" cy="304.5" r="1.65" fill="#6f848d"/><circle cx="1476.6" cy="311.8" r="1.65" fill="#6f848d"/><circle cx="1483.4" cy="297.2" r="1.65" fill="#6f848d"/><circle cx="1483.4" cy="304.5" r="1.65" fill="#6f848d"/><circle cx="1483.4" cy="311.8" r="1.65" fill="#6f848d"/><circle cx="1861.7" cy="297.6" r="1.65" fill="#6f848d"/><circle cx="1861.7" cy="304.1" r="1.65" fill="#6f848d"/><circle cx="1861.7" cy="310.7" r="1.65" fill="#6f848d"/><circle cx="1476.6" cy="609.2" r="1.65" fill="#6f848d"/><circle cx="1476.6" cy="616.5" r="1.65" fill="#6f848d"/><circle cx="1476.6" cy="623.8" r="1.65" fill="#6f848d"/><circle cx="1483.4" cy="609.2" r="1.65" fill="#6f848d"/><circle cx="1483.4" cy="616.5" r="1.65" fill="#6f848d"/><circle cx="1483.4" cy="623.8" r="1.65" fill="#6f848d"/><circle cx="1861.7" cy="609.6" r="1.65" fill="#6f848d"/><circle cx="1861.7" cy="616.1" r="1.65" fill="#6f848d"/><circle cx="1861.7" cy="622.7" r="1.65" fill="#6f848d"/><circle cx="84.6" cy="921.5" r="1.65" fill="#6f848d"/><circle cx="84.6" cy="928.8" r="1.65" fill="#6f848d"/><circle cx="84.6" cy="936.1" r="1.65" fill="#6f848d"/><circle cx="91.4" cy="921.5" r="1.65" fill="#6f848d"/><circle cx="91.4" cy="928.8" r="1.65" fill="#6f848d"/><circle cx="91.4" cy="936.1" r="1.65" fill="#6f848d"/><circle cx="469.7" cy="921.5" r="1.65" fill="#6f848d"/><circle cx="469.7" cy="928.0" r="1.65" fill="#6f848d"/><circle cx="469.7" cy="934.6" r="1.65" fill="#6f848d"/><circle cx="548.6" cy="921.5" r="1.65" fill="#6f848d"/><circle cx="548.6" cy="928.8" r="1.65" fill="#6f848d"/><circle cx="548.6" cy="936.1" r="1.65" fill="#6f848d"/><circle cx="555.4" cy="921.5" r="1.65" fill="#6f848d"/><circle cx="555.4" cy="928.8" r="1.65" fill="#6f848d"/><circle cx="555.4" cy="936.1" r="1.65" fill="#6f848d"/><circle cx="933.7" cy="921.5" r="1.65" fill="#6f848d"/><circle cx="933.7" cy="928.0" r="1.65" fill="#6f848d"/><circle cx="933.7" cy="934.6" r="1.65" fill="#6f848d"/><circle cx="1012.6" cy="921.5" r="1.65" fill="#6f848d"/><circle cx="1012.6" cy="928.8" r="1.65" fill="#6f848d"/><circle cx="1012.6" cy="936.1" r="1.65" fill="#6f848d"/><circle cx="1019.4" cy="921.5" r="1.65" fill="#6f848d"/><circle cx="1019.4" cy="928.8" r="1.65" fill="#6f848d"/><circle cx="1019.4" cy="936.1" r="1.65" fill="#6f848d"/><circle cx="1397.7" cy="921.5" r="1.65" fill="#6f848d"/><circle cx="1397.7" cy="928.0" r="1.65" fill="#6f848d"/><circle cx="1397.7" cy="934.6" r="1.65" fill="#6f848d"/><circle cx="1476.6" cy="921.5" r="1.65" fill="#6f848d"/><circle cx="1476.6" cy="928.8" r="1.65" fill="#6f848d"/><circle cx="1476.6" cy="936.1" r="1.65" fill="#6f848d"/><circle cx="1483.4" cy="921.5" r="1.65" fill="#6f848d"/><circle cx="1483.4" cy="928.8" r="1.65" fill="#6f848d"/><circle cx="1483.4" cy="936.1" r="1.65" fill="#6f848d"/><circle cx="1861.7" cy="921.5" r="1.65" fill="#6f848d"/><circle cx="1861.7" cy="928.0" r="1.65" fill="#6f848d"/><circle cx="1861.7" cy="934.6" r="1.65" fill="#6f848d"/><circle cx="548.6" cy="297.2" r="1.65" fill="#6f848d"/><circle cx="548.6" cy="304.5" r="1.65" fill="#6f848d"/><circle cx="548.6" cy="311.8" r="1.65" fill="#6f848d"/><circle cx="555.4" cy="297.2" r="1.65" fill="#6f848d"/><circle cx="555.4" cy="304.5" r="1.65" fill="#6f848d"/><circle cx="555.4" cy="311.8" r="1.65" fill="#6f848d"/><circle cx="1397.7" cy="297.6" r="1.65" fill="#6f848d"/><circle cx="1397.7" cy="304.1" r="1.65" fill="#6f848d"/><circle cx="1397.7" cy="310.7" r="1.65" fill="#6f848d"/><text x="0" y="0" transform="translate(565.2,614.5) rotate(-90)" text-anchor="middle" font-family="Liberation Sans, sans-serif" font-size="15.6" fill="#4f4f4f">USD</text></svg></body></html>
